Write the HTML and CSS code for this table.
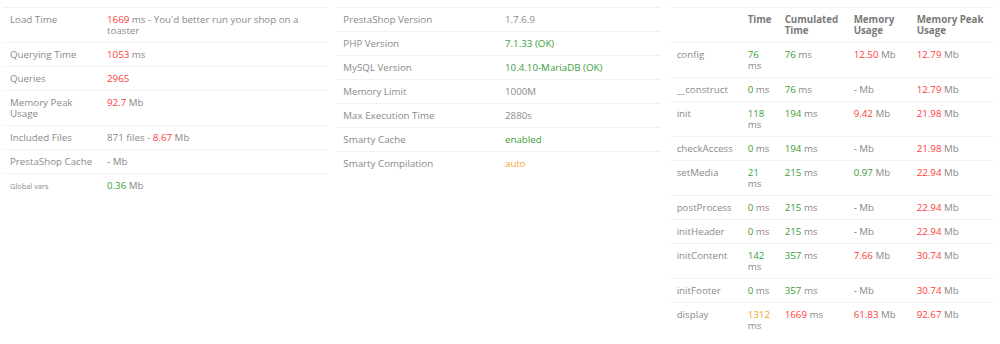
FILE: index.html
```html
<!DOCTYPE html>
<html>
<head>
<meta charset="utf-8">
<link rel="stylesheet" href="styles.css">
</head>
<body>
<div class="grid">
  <div class="col">
    <table class="tbl tbl-left">
      <tr><td class="lbl">Load Time</td><td><span class="red">1669</span> ms - You'd better run your shop on a toaster</td></tr>
      <tr><td class="lbl">Querying Time</td><td><span class="red">1053</span> ms</td></tr>
      <tr><td class="lbl">Queries</td><td><span class="red">2965</span></td></tr>
      <tr><td class="lbl">Memory Peak Usage</td><td><span class="red">92.7</span> Mb</td></tr>
      <tr><td class="lbl">Included Files</td><td>871 files - <span class="red">8.67</span> Mb</td></tr>
      <tr><td class="lbl">PrestaShop Cache</td><td><span class="green">-</span> Mb</td></tr>
      <tr><td class="lbl"><small>Global vars</small></td><td><span class="green">0.36</span> Mb</td></tr>
    </table>
  </div>
  <div class="col">
    <table class="tbl tbl-mid">
      <tr><td class="lbl">PrestaShop Version</td><td>1.7.6.9</td></tr>
      <tr><td class="lbl">PHP Version</td><td><span class="green">7.1.33 (OK)</span></td></tr>
      <tr><td class="lbl">MySQL Version</td><td><span class="green">10.4.10-MariaDB (OK)</span></td></tr>
      <tr><td class="lbl">Memory Limit</td><td>1000M</td></tr>
      <tr><td class="lbl">Max Execution Time</td><td>2880s</td></tr>
      <tr><td class="lbl">Smarty Cache</td><td><span class="green">enabled</span></td></tr>
      <tr><td class="lbl">Smarty Compilation</td><td><span class="orange">auto</span></td></tr>
    </table>
  </div>
  <div class="col">
    <table class="tbl tbl-right">
      <colgroup>
        <col class="c-name"><col class="c-time"><col class="c-cum"><col class="c-mem"><col class="c-peak">
      </colgroup>
      <tr><th></th><th>Time</th><th>Cumulated Time</th><th>Memory Usage</th><th>Memory Peak Usage</th></tr>
      <tr><td class="lbl">config</td><td><span class="green">76</span> ms</td><td><span class="green">76</span> ms</td><td><span class="red">12.50</span> Mb</td><td><span class="red">12.79</span> Mb</td></tr>
      <tr><td class="lbl">__construct</td><td><span class="green">0</span> ms</td><td><span class="green">76</span> ms</td><td><span class="green">-</span> Mb</td><td><span class="red">12.79</span> Mb</td></tr>
      <tr><td class="lbl">init</td><td><span class="green">118</span> ms</td><td><span class="green">194</span> ms</td><td><span class="red">9.42</span> Mb</td><td><span class="red">21.98</span> Mb</td></tr>
      <tr><td class="lbl">checkAccess</td><td><span class="green">0</span> ms</td><td><span class="green">194</span> ms</td><td><span class="green">-</span> Mb</td><td><span class="red">21.98</span> Mb</td></tr>
      <tr><td class="lbl">setMedia</td><td><span class="green">21</span> ms</td><td><span class="green">215</span> ms</td><td><span class="green">0.97</span> Mb</td><td><span class="red">22.94</span> Mb</td></tr>
      <tr><td class="lbl">postProcess</td><td><span class="green">0</span> ms</td><td><span class="green">215</span> ms</td><td><span class="green">-</span> Mb</td><td><span class="red">22.94</span> Mb</td></tr>
      <tr><td class="lbl">initHeader</td><td><span class="green">0</span> ms</td><td><span class="green">215</span> ms</td><td><span class="green">-</span> Mb</td><td><span class="red">22.94</span> Mb</td></tr>
      <tr><td class="lbl">initContent</td><td><span class="green">142</span> ms</td><td><span class="green">357</span> ms</td><td><span class="red">7.66</span> Mb</td><td><span class="red">30.74</span> Mb</td></tr>
      <tr><td class="lbl">initFooter</td><td><span class="green">0</span> ms</td><td><span class="green">357</span> ms</td><td><span class="green">-</span> Mb</td><td><span class="red">30.74</span> Mb</td></tr>
      <tr><td class="lbl">display</td><td><span class="orange">1312</span> ms</td><td><span class="red">1669</span> ms</td><td><span class="red">61.83</span> Mb</td><td><span class="red">92.67</span> Mb</td></tr>
    </table>
  </div>
</div>
</body>
</html>
```
FILE: styles.css
```css
html, body {
  margin: 0;
  padding: 0;
  background: #ffffff;
}
body {
  font-family: "Open Sans", "Liberation Sans", sans-serif;
  font-size: 9.75px;
  color: #8a8a8a;
}
.grid {
  display: grid;
  grid-template-columns: repeat(3, 1fr);
}
.col {
  padding: 7px 7px 0 3px;
}
.tbl {
  width: 100%;
  border-collapse: collapse;
  table-layout: fixed;
}
.tbl td, .tbl th {
  box-sizing: border-box;
  border-top: 1px solid #f1f1f1;
  padding: 6px 7px;
  line-height: 11px;
  text-align: left;
  vertical-align: top;
}
.tbl-left .lbl { width: 30%; }
.tbl-mid .lbl { width: 50%; }
.tbl th {
  font-weight: 700;
  color: #7a7a7a;
}
.c-name { width: 71px; }
.c-time { width: 37px; }
.c-cum { width: 69px; }
.c-mem { width: 63px; }
.c-peak { width: auto; }
small {
  font-size: 76%;
}
.red { color: #ff3b3b; }
.green { color: #3a9e3a; }
.orange { color: #f5a32a; }
```
